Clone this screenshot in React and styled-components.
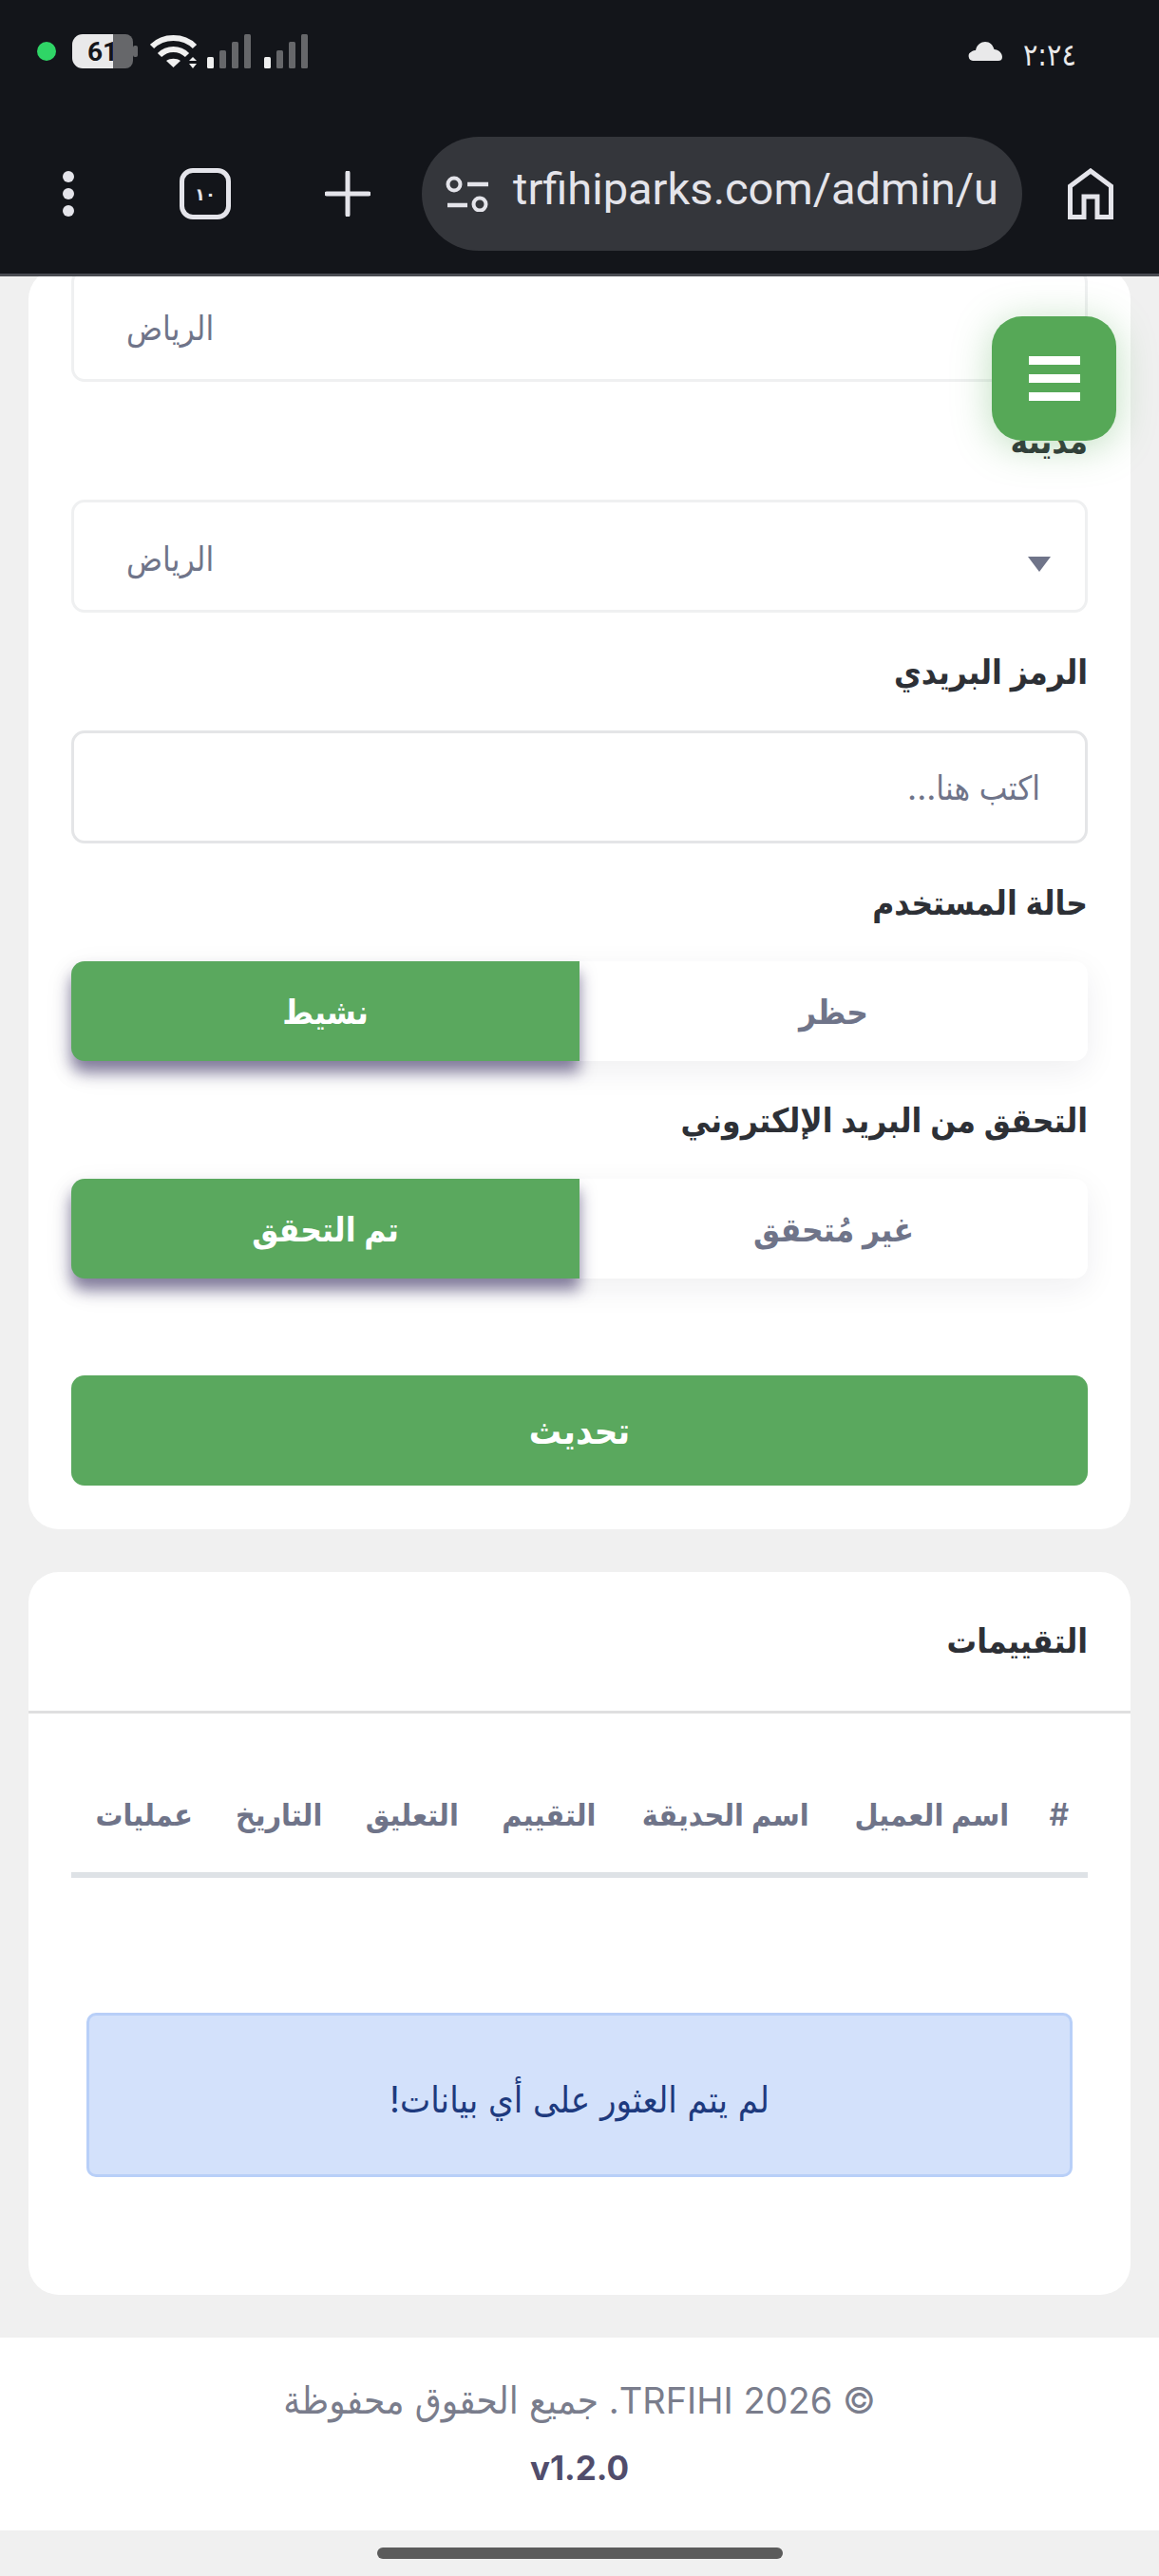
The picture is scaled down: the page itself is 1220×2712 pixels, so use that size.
import React from "react";
import styled, { createGlobalStyle } from "styled-components";

const GlobalStyle = createGlobalStyle`
  * { box-sizing: border-box; }
  html, body { margin: 0; padding: 0; background: #f0f0f0; }
  body { font-family: "Inter", "DejaVu Sans Condensed", "DejaVu Sans", sans-serif; }
`;

const Screen = styled.div`
  width: 1220px;
  height: 2712px;
  display: flex;
  flex-direction: column;
  overflow: hidden;
  position: relative;
  background: #f0f0f0;
`;

const BrowserChrome = styled.header`
  flex: none;
  height: 291px;
  background: #13151a;
  border-bottom: 3px solid #4a4c52;
  direction: ltr;
`;

const StatusBar = styled.div`
  height: 144px;
  padding: 36px 87px 0 39px;
  display: flex;
  justify-content: space-between;
  align-items: flex-start;
`;

const StatusGroup = styled.div`
  display: flex;
  align-items: center;
  height: 36px;
`;

const GreenDot = styled.span`
  width: 20px;
  height: 20px;
  border-radius: 50%;
  background: #2fd566;
  margin-right: 17px;
`;

const Battery = styled.div`
  width: 69px;
  height: 36px;
  margin-right: 13px;
  flex: none;
`;

const Clock = styled.span`
  font-family: "DejaVu Sans Condensed", "DejaVu Sans", sans-serif;
  font-size: 32px;
  color: #e9e9ea;
  margin-top: 8px;
`;

const UrlRow = styled.div`
  display: flex;
  align-items: center;
  height: 120px;
  position: relative;
`;

const IconSlot = styled.div`
  flex: none;
  width: ${(p) => p.$w}px;
  margin-left: ${(p) => p.$ml || 0}px;
  display: flex;
  justify-content: center;
  align-items: center;
`;

const TabCount = styled.div`
  width: 54px;
  height: 54px;
  border: 5px solid #e4e4ea;
  border-radius: 14px;
  color: #e4e4ea;
  font-family: "DejaVu Sans", sans-serif;
  font-size: 18px;
  font-weight: 700;
  display: flex;
  align-items: center;
  justify-content: center;
`;

const UrlPill = styled.div`
  width: 632px;
  height: 120px;
  margin-left: 54px;
  border-radius: 60px;
  background: #34363b;
  display: flex;
  align-items: center;
  padding-left: 25px;
  gap: 25px;
  overflow: hidden;
`;

const UrlText = styled.span`
  font-family: "Roboto", sans-serif;
  font-size: 47px;
  color: #e4e4ea;
  white-space: nowrap;
  margin-top: -12px;
`;

const Content = styled.main`
  flex: 1;
  min-height: 0;
  overflow: hidden;
  display: flex;
  flex-direction: column;
  justify-content: flex-end;
  direction: rtl;
`;

const Card = styled.section`
  flex: none;
  margin: 0 30px ${(p) => p.$mb}px;
  background: #fff;
  border-radius: 32px;
`;

const FormBody = styled.div`
  padding: 0 45px 46px;
`;

const FieldLabel = styled.div`
  height: 43px;
  line-height: 43px;
  margin: 41px 0 40px;
  font-size: 35px;
  font-weight: 600;
  color: #2d3036;
`;

const SelectBox = styled.div`
  direction: ltr;
  height: 119px;
  border: 3px solid #eff0f1;
  border-radius: 14px;
  padding: 4px 36px 0 55px;
  display: flex;
  align-items: center;
  justify-content: space-between;
  font-size: 35px;
  color: #6f7489;
`;

const Caret = styled.span`
  width: 0;
  height: 0;
  margin-top: 12px;
  border-left: 12px solid transparent;
  border-right: 12px solid transparent;
  border-top: 16px solid #6f7489;
`;

const TextInput = styled.input`
  display: block;
  width: 100%;
  height: 119px;
  border: 3px solid #e4e5e7;
  border-radius: 14px;
  padding: 0 47px;
  background: #fff;
  font: inherit;
  font-size: 35px;
  color: #6f7489;
  &::placeholder { color: #6f7489; opacity: 1; }
`;

const Toggle = styled.div`
  display: grid;
  grid-template-columns: 1fr 1fr;
  height: 105px;
  border-radius: 14px;
  background: #fff;
  box-shadow: 0 10px 34px rgba(30, 30, 50, 0.07);
`;

const ToggleOption = styled.div`
  display: flex;
  align-items: center;
  justify-content: center;
  font-size: 35px;
  font-weight: 600;
  color: ${(p) => (p.$active ? "#fff" : "#6f7489")};
  background: ${(p) => (p.$active ? "#5aa85e" : "transparent")};
  direction: rtl;
  ${(p) => p.$active && "border-radius: 14px 0 0 14px; box-shadow: 0 12px 16px rgba(60, 50, 100, 0.62);"}
`;

const SubmitButton = styled.button`
  display: block;
  width: 100%;
  height: 116px;
  margin-top: 102px;
  border: 0;
  border-radius: 14px;
  background: #5aa85e;
  color: #fff;
  font: inherit;
  font-size: 38px;
  font-weight: 600;
`;

const CardHeader = styled.div`
  height: 149px;
  padding: 0 45px 2px;
  display: flex;
  align-items: center;
  border-bottom: 3px solid #dfdfe0;
  font-size: 35px;
  font-weight: 600;
  color: #2d3036;
`;

const CardBody = styled.div`
  padding: 45px 45px 0;
`;

const ReviewTable = styled.table`
  width: 100%;
  border-collapse: separate;
  border-spacing: 0;
  th {
    height: 128px;
    padding: 0 20px;
    border-bottom: 6px solid #dee2e6;
    font-size: 32px;
    font-weight: 600;
    color: #6f7489;
    white-space: nowrap;
    text-align: right;
  }
`;

const EmptyNotice = styled.div`
  height: 173px;
  margin: 142px 16px 124px;
  padding-top: 8px;
  border: 3px solid #b8cff8;
  border-radius: 10px;
  background: #d3e1fb;
  color: #1e3a7e;
  font-size: 38px;
  display: flex;
  align-items: center;
  justify-content: center;
`;

const Footer = styled.footer`
  flex: none;
  height: 203px;
  background: #fff;
  display: flex;
  flex-direction: column;
  align-items: center;
  padding-top: 45px;
  gap: 28px;
`;

const Copyright = styled.div`
  font-size: 38px;
  line-height: 42px;
  color: #7a7d8c;
`;

const CopyrightArabic = styled.span`
  font-size: 40px;
`;

const Version = styled.div`
  font-size: 35px;
  line-height: 44px;
  font-weight: 700;
  color: #514d6c;
  direction: ltr;
`;

const NavBar = styled.div`
  flex: none;
  height: 48px;
  background: #f0f0f0;
  display: flex;
  justify-content: center;
  padding-top: 18px;
`;

const HomePill = styled.span`
  width: 427px;
  height: 12px;
  border-radius: 6px;
  background: #5b5b5b;
`;

const MenuFab = styled.button`
  position: absolute;
  left: 1044px;
  top: 333px;
  width: 131px;
  height: 131px;
  border: 0;
  border-radius: 32px;
  background: #56a857;
  box-shadow: 0 6px 40px rgba(86, 168, 87, 0.38);
  display: flex;
  flex-direction: column;
  align-items: center;
  justify-content: center;
  gap: 10px;
  padding: 0;
`;

const FabLine = styled.span`
  width: 54px;
  height: 9px;
  background: #fff;
`;

const BatteryIcon = () => (
  <svg width="69" height="36" viewBox="0 0 69 36">
    <path d="M11 0H44V36H11A11 11 0 0 1 0 25V11A11 11 0 0 1 11 0Z" fill="#e9e9ea" />
    <text x="16" y="28" fontFamily="Roboto, sans-serif" fontSize="28" fontWeight="700" fill="#13151a">61</text>
    <path d="M43 0H56A8 8 0 0 1 64 8V28A8 8 0 0 1 56 36H43Z" fill="#66676a" />
    <rect x="64" y="12" width="5" height="12" rx="2" fill="#66676a" />
  </svg>
);

const WifiIcon = () => (
  <svg width="50" height="36" viewBox="0 0 50 36" style={{ marginRight: 10 }}>
    <path d="M2 13C14 1 35 1 47 13" fill="none" stroke="#f0f0f0" strokeWidth="6" />
    <path d="M10 22C18 14 31 14 39 22" fill="none" stroke="#f0f0f0" strokeWidth="6" />
    <path d="M17 28C21 25 28 25 32 28L24.500 35Z" fill="#f0f0f0" />
    <path d="M45 24L49 28H41ZM45 36L41 31H49Z" fill="#f0f0f0" />
  </svg>
);

const SignalIcon = ({ mr }) => (
  <svg width="47" height="36" viewBox="0 0 47 36" style={{ marginRight: mr }}>
    <rect x="0" y="24" width="7" height="12" rx="1.500" fill="#efefef" />
    <rect x="13" y="17" width="7" height="19" rx="1.500" fill="#66676a" />
    <rect x="26" y="8" width="7" height="28" rx="1.500" fill="#66676a" />
    <rect x="39" y="0" width="7" height="36" rx="1.500" fill="#66676a" />
  </svg>
);

const CloudIcon = () => (
  <svg width="36" height="20" viewBox="0 0 36 20" style={{ marginRight: 22 }}>
    <path d="M5 20A5 5 0 0 1 3.500 10.500C5 9 7 9 8 9C9 3 14 0 18 0C23 0 26 3 27.500 8C32 8 36 12 36 16C36 19 34 20 32 20Z" fill="#e9e9ea" />
  </svg>
);

const FilterIcon = () => (
  <svg width="46" height="38" viewBox="0 0 46 38" style={{ flex: "none" }}>
    <circle cx="9" cy="9" r="6.500" fill="none" stroke="#e4e4ea" strokeWidth="4" />
    <path d="M23 9H45M2 31H23" stroke="#e4e4ea" strokeWidth="4.500" />
    <circle cx="36" cy="30" r="6.500" fill="none" stroke="#e4e4ea" strokeWidth="4" />
  </svg>
);

const MoreIcon = () => (
  <svg width="12" height="48" viewBox="0 0 12 48">
    <circle cx="6" cy="6" r="6" fill="#e4e4ea" />
    <circle cx="6" cy="24" r="6" fill="#e4e4ea" />
    <circle cx="6" cy="42" r="6" fill="#e4e4ea" />
  </svg>
);

const PlusIcon = () => (
  <svg width="48" height="48" viewBox="0 0 48 48">
    <path d="M24 2V46M2 24H46" stroke="#e4e4ea" strokeWidth="5" strokeLinecap="round" />
  </svg>
);

const HomeIcon = () => (
  <svg width="48" height="54" viewBox="0 0 48 54">
    <path d="M2.500 51.500V19L24 3L45.500 19V51.500H31V30H17V51.500Z" fill="none" stroke="#e4e4ea" strokeWidth="5" />
  </svg>
);

const headers = ["#", "اسم العميل", "اسم الحديقة", "التقييم", "التعليق", "التاريخ", "عمليات"];

export default function App() {
  return (
    <Screen>
      <GlobalStyle />
      <BrowserChrome>
        <StatusBar>
          <StatusGroup>
            <GreenDot />
            <Battery>
              <BatteryIcon />
            </Battery>
            <WifiIcon />
            <SignalIcon mr={13} />
            <SignalIcon />
          </StatusGroup>
          <StatusGroup>
            <CloudIcon />
            <Clock>٢:٢٤</Clock>
          </StatusGroup>
        </StatusBar>
        <UrlRow>
          <IconSlot $w={12} $ml={66}>
            <MoreIcon />
          </IconSlot>
          <IconSlot $w={54} $ml={111}>
            <TabCount>١٠</TabCount>
          </IconSlot>
          <IconSlot $w={48} $ml={99}>
            <PlusIcon />
          </IconSlot>
          <UrlPill>
            <FilterIcon />
            <UrlText>trfihiparks.com/admin/u</UrlText>
          </UrlPill>
          <IconSlot $w={48} $ml={48}>
            <HomeIcon />
          </IconSlot>
        </UrlRow>
      </BrowserChrome>

      <Content>
        <Card $mb={45}>
          <FormBody>
            <SelectBox>
              <span>الرياض</span>
              <Caret />
            </SelectBox>
            <FieldLabel>مدينة</FieldLabel>
            <SelectBox>
              <span>الرياض</span>
              <Caret />
            </SelectBox>
            <FieldLabel>الرمز البريدي</FieldLabel>
            <TextInput placeholder="اكتب هنا..." />
            <FieldLabel>حالة المستخدم</FieldLabel>
            <Toggle>
              <ToggleOption>حظر</ToggleOption>
              <ToggleOption $active>نشيط</ToggleOption>
            </Toggle>
            <FieldLabel>التحقق من البريد الإلكتروني</FieldLabel>
            <Toggle>
              <ToggleOption>غير مُتحقق</ToggleOption>
              <ToggleOption $active>تم التحقق</ToggleOption>
            </Toggle>
            <SubmitButton>تحديث</SubmitButton>
          </FormBody>
        </Card>

        <Card $mb={45}>
          <CardHeader>التقييمات</CardHeader>
          <CardBody>
            <ReviewTable>
              <thead>
                <tr>
                  {headers.map((h) => (
                    <th key={h}>{h}</th>
                  ))}
                </tr>
              </thead>
            </ReviewTable>
            <EmptyNotice>لم يتم العثور على أي بيانات!</EmptyNotice>
          </CardBody>
        </Card>

        <Footer>
          <Copyright>
            © 2026 TRFIHI. <CopyrightArabic>جميع الحقوق محفوظة</CopyrightArabic>
          </Copyright>
          <Version>v1.2.0</Version>
        </Footer>
        <NavBar>
          <HomePill />
        </NavBar>
      </Content>

      <MenuFab aria-label="menu">
        <FabLine />
        <FabLine />
        <FabLine />
      </MenuFab>
    </Screen>
  );
}
